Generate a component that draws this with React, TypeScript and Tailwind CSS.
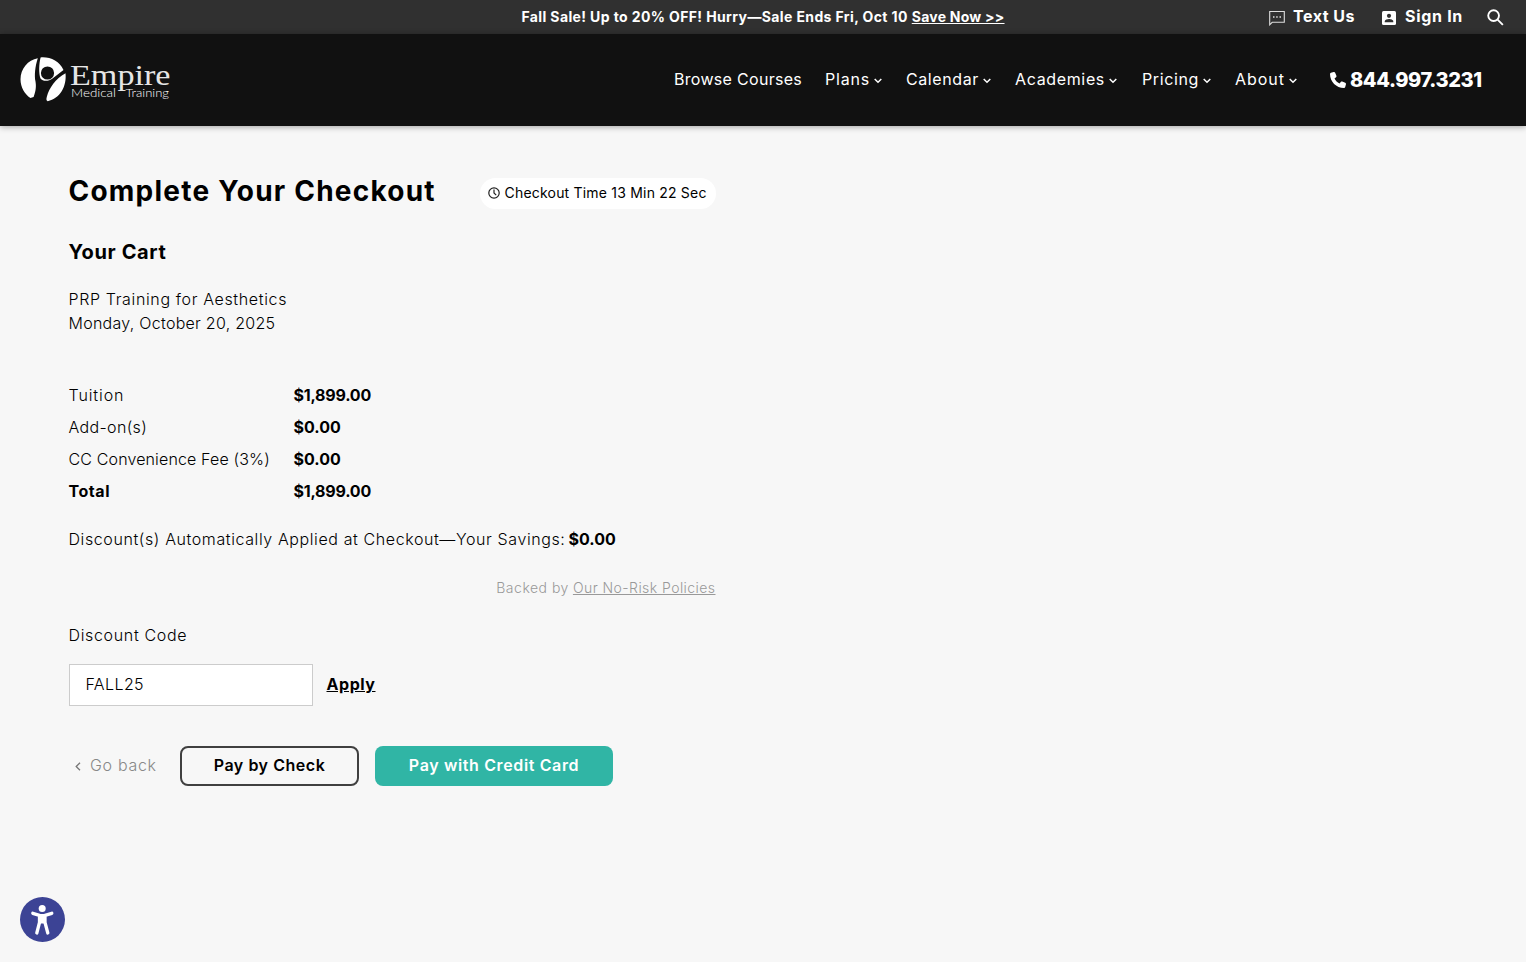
import type { ReactNode } from "react";

function Chevron() {
  return (
    <svg viewBox="0 0 8 6" className="mt-1 ml-1 h-1.5 w-2" fill="none" stroke="white" strokeWidth="1.5">
      <path d="M0.7 1 4 4.3 7.3 1" />
    </svg>
  );
}

function Logo() {
  return (
    <svg viewBox="0 0 152 48" className="h-12 w-38" role="img" aria-label="Empire Medical Training">
      <g fill="#fff">
        <path d="M17.8 2.200C8 4 0.500 12.500 0.500 23.300c0 8.200 4.200 14.900 9.900 18.700l3.200-1c2.600-7 2.600-11 1.900-15.500-1.200-6-.5-15 2.300-23.300Z" />
        <path fillRule="evenodd" d="M20.600 1.400C30 .6 39.500 5 43.500 14L32.500 22.500C29 25.300 23 26 20.500 22.500 18.600 17 18.900 8 20.600 1.400Zm6.900 9a6.600 6.600 0 1 0 0 13.200 6.600 6.600 0 0 0 0-13.200Z" />
        <path d="M45.500 17.300c1.400 13-5.500 25.500-17.800 27.900-1.600-.8-1.500-2.200-.8-4.700 2.300-8.500 8.500-17.500 18.600-23.200Z" />
        <text x="50" y="29" fontSize="30" textLength="100.500" lengthAdjust="spacingAndGlyphs" fontFamily="Liberation Serif, serif" fill="#e6e6e6">Empire</text>
        <text x="51" y="41.300" fontSize="12.500" textLength="45" lengthAdjust="spacingAndGlyphs" fontFamily="Lato, sans-serif" fontWeight="300">Medical</text>
        <text x="105.500" y="41.300" fontSize="12.500" textLength="43.500" lengthAdjust="spacingAndGlyphs" fontFamily="Lato, sans-serif" fontWeight="300">Training</text>
      </g>
    </svg>
  );
}

function Row({ label, value }: { label: ReactNode; value: ReactNode }) {
  return (
    <div className="flex h-8 items-center">
      <div className="w-[225px]">{label}</div>
      <div className="font-bold text-black">{value}</div>
    </div>
  );
}

export default function App() {
  return (
    <div className="flex min-h-[962px] flex-col bg-[#f7f7f7] font-['Inter',sans-serif] text-base leading-6 font-light text-black">
      <div className="grid h-[34px] grid-cols-[1fr_auto_1fr] items-center bg-[#303030] font-bold text-white">
        <div />
        <div className="flex gap-1 text-sm">
          <span className="tracking-[0.38px]">Fall Sale! Up to 20% OFF! Hurry—Sale Ends Fri, Oct 10</span>
          <a className="tracking-[0.24px] underline">Save Now &gt;&gt;</a>
        </div>
        <div className="flex items-center justify-end pr-[22px] pb-0.5">
          <svg viewBox="0 0 16 16" className="mt-1 mr-2 size-4" fill="none" stroke="#ddd" strokeWidth="1.1">
            <path d="M.7 14.800V1.500H15.300V12.300H3.200Z" />
            <path d="M4 7h1.500M7.200 7h1.500M10.500 7H12" strokeWidth="1.400" />
          </svg>
          <span className="tracking-[0.5px]">Text Us</span>
          <svg viewBox="0 0 14 14" className="mt-1 mr-[9px] ml-[27px] size-3.5">
            <rect width="14" height="14" rx="1.500" fill="white" />
            <circle cx="7" cy="4.800" r="2.100" fill="#303030" />
            <path d="M2.700 11.200v-.8c0-1.500 2.900-2.300 4.300-2.300s4.300.8 4.300 2.300v.8Z" fill="#303030" />
          </svg>
          <span className="tracking-[0.7px]">Sign In</span>
          <svg viewBox="0 0 18 18" className="mt-0.5 ml-6 size-[17px]" fill="none" stroke="white" strokeWidth="2">
            <circle cx="7" cy="7" r="5.700" />
            <path d="m11.200 11.200 5.600 5.600" />
          </svg>
        </div>
      </div>

      <header className="flex h-[92px] items-center justify-between bg-[#111] pr-11 pl-5 font-normal text-white shadow-[0_1px_6px_rgba(0,0,0,0.35)]">
        <Logo />
        <nav className="flex items-center">
          <a className="w-[151px] pb-0.5 tracking-[0.3px]">Browse Courses</a>
          <a className="flex w-[81px] items-center pb-0.5 tracking-[0.8px]">Plans<Chevron /></a>
          <a className="flex w-[109px] items-center pb-0.5 tracking-[0.6px]">Calendar<Chevron /></a>
          <a className="flex w-[127px] items-center pb-0.5 tracking-[0.65px]">Academies<Chevron /></a>
          <a className="flex w-[93px] items-center pb-0.5 tracking-[0.6px]">Pricing<Chevron /></a>
          <a className="flex w-[95px] items-center pb-0.5 tracking-[0.98px]">About<Chevron /></a>
          <a className="flex w-[152px] items-center gap-1 text-xl font-extrabold tracking-[-0.42px] whitespace-nowrap">
            <svg viewBox="0 0 512 512" className="size-4 shrink-0" fill="white">
              <path d="M164.900 24.600c-7.700-18.600-28-28.500-47.400-23.200l-88 24C12.100 30.200 0 46 0 64c0 247.400 200.600 448 448 448 18 0 33.800-12.100 38.600-29.500l24-88c5.300-19.400-4.600-39.700-23.200-47.400l-96-40c-16.300-6.800-35.200-2.100-46.300 11.600L304.700 368C234.300 334.700 177.300 277.700 144 207.300L193.300 167c13.700-11.200 18.400-30 11.600-46.300l-40-96z" />
            </svg>
            844.997.3231
          </a>
        </nav>
      </header>

      <main className="w-[715.5px] pt-[47px] pl-[68.5px]">
        <div className="flex h-9 items-center justify-between">
          <h1 className="text-[28px] leading-9 font-bold tracking-[1.22px] whitespace-nowrap">Complete Your Checkout</h1>
          <div className="mt-1 flex h-[31px] w-[236px] shrink-0 items-center rounded-full bg-white pl-2 text-sm font-normal tracking-[0.2px] whitespace-nowrap">
            <svg viewBox="0 0 12 12" className="mr-[5px] size-3" fill="none" stroke="#222" strokeWidth="1.200">
              <circle cx="6" cy="6" r="5.200" />
              <path d="M6 2.500V6l2.200 2.200" />
            </svg>
            Checkout Time 13 Min 22 Sec
          </div>
        </div>

        <h2 className="mt-[31px] text-xl leading-6 font-bold tracking-[0.63px]">Your Cart</h2>

        <div className="mt-[23px]">
          <p className="tracking-[0.64px]">PRP Training for Aesthetics</p>
          <p className="tracking-[0.27px]">Monday, October 20, 2025</p>
        </div>

        <div className="mt-11">
          <Row label={<span className="tracking-[0.9px]">Tuition</span>} value={<span className="tracking-[-0.22px]">$1,899.00</span>} />
          <Row label={<span className="tracking-[0.35px]">Add-on(s)</span>} value="$0.00" />
          <Row label={<span className="tracking-[0.14px]">CC Convenience Fee (3%)</span>} value="$0.00" />
          <Row label={<span className="font-bold tracking-[0.55px]">Total</span>} value={<span className="tracking-[-0.22px]">$1,899.00</span>} />
        </div>

        <p className="mt-5 flex gap-[3px]">
          <span className="tracking-[0.6px]">Discount(s) Automatically Applied at Checkout—Your Savings:</span>
          <span className="font-bold">$0.00</span>
        </p>

        <p className="mt-[25px] flex justify-end gap-1 text-sm leading-6 text-[#999]">
          <span className="tracking-[0.5px]">Backed by</span>
          <a className="tracking-[0.44px] underline">Our No-Risk Policies</a>
        </p>

        <label className="mt-[23px] block tracking-[0.66px]">Discount Code</label>
        <div className="mt-[17px] flex items-center gap-3.5">
          <div className="flex h-[42px] w-[244px] items-center border border-[#ccc] bg-white pb-0.5 pl-4 tracking-[0.4px]">FALL25</div>
          <a className="pb-0.5 font-bold tracking-[0.55px] underline">Apply</a>
        </div>

        <div className="mt-10 flex items-center">
          <a className="flex w-[111.5px] items-center pb-0.5 pl-1.5 tracking-[0.7px] text-[#888]">
            <svg viewBox="0 0 6 9" className="mt-0.5 mr-[9.5px] h-[9px] w-1.5" fill="none" stroke="#777" strokeWidth="1.300">
              <path d="M5 .7 1.200 4.500 5 8.300" />
            </svg>
            Go back
          </a>
          <button className="h-10 w-[179px] rounded-lg border-2 border-[#404040] pb-0.5 font-semibold tracking-[0.54px]">Pay by Check</button>
          <button className="ml-4 h-10 w-[238px] rounded-lg bg-[#30b5a5] pb-0.5 font-semibold tracking-[0.63px] text-white">Pay with Credit Card</button>
        </div>
      </main>

      <div className="mt-auto flex pb-5 pl-5">
        <svg viewBox="0 0 45 45" className="size-[45px]">
          <circle cx="22.500" cy="22.500" r="22.500" fill="#3c4395" />
          <circle cx="22.200" cy="11.500" r="3.500" fill="white" />
          <path d="M12.800 16.300 19.500 18.300V25.500L16.800 36M31.800 16.300 25 18.300V25.500L27.800 36" fill="none" stroke="white" strokeWidth="3.300" strokeLinecap="round" strokeLinejoin="round" />
          <path d="M18.500 17h7.500v9.500h-7.500Z" fill="white" />
        </svg>
      </div>
    </div>
  );
}
